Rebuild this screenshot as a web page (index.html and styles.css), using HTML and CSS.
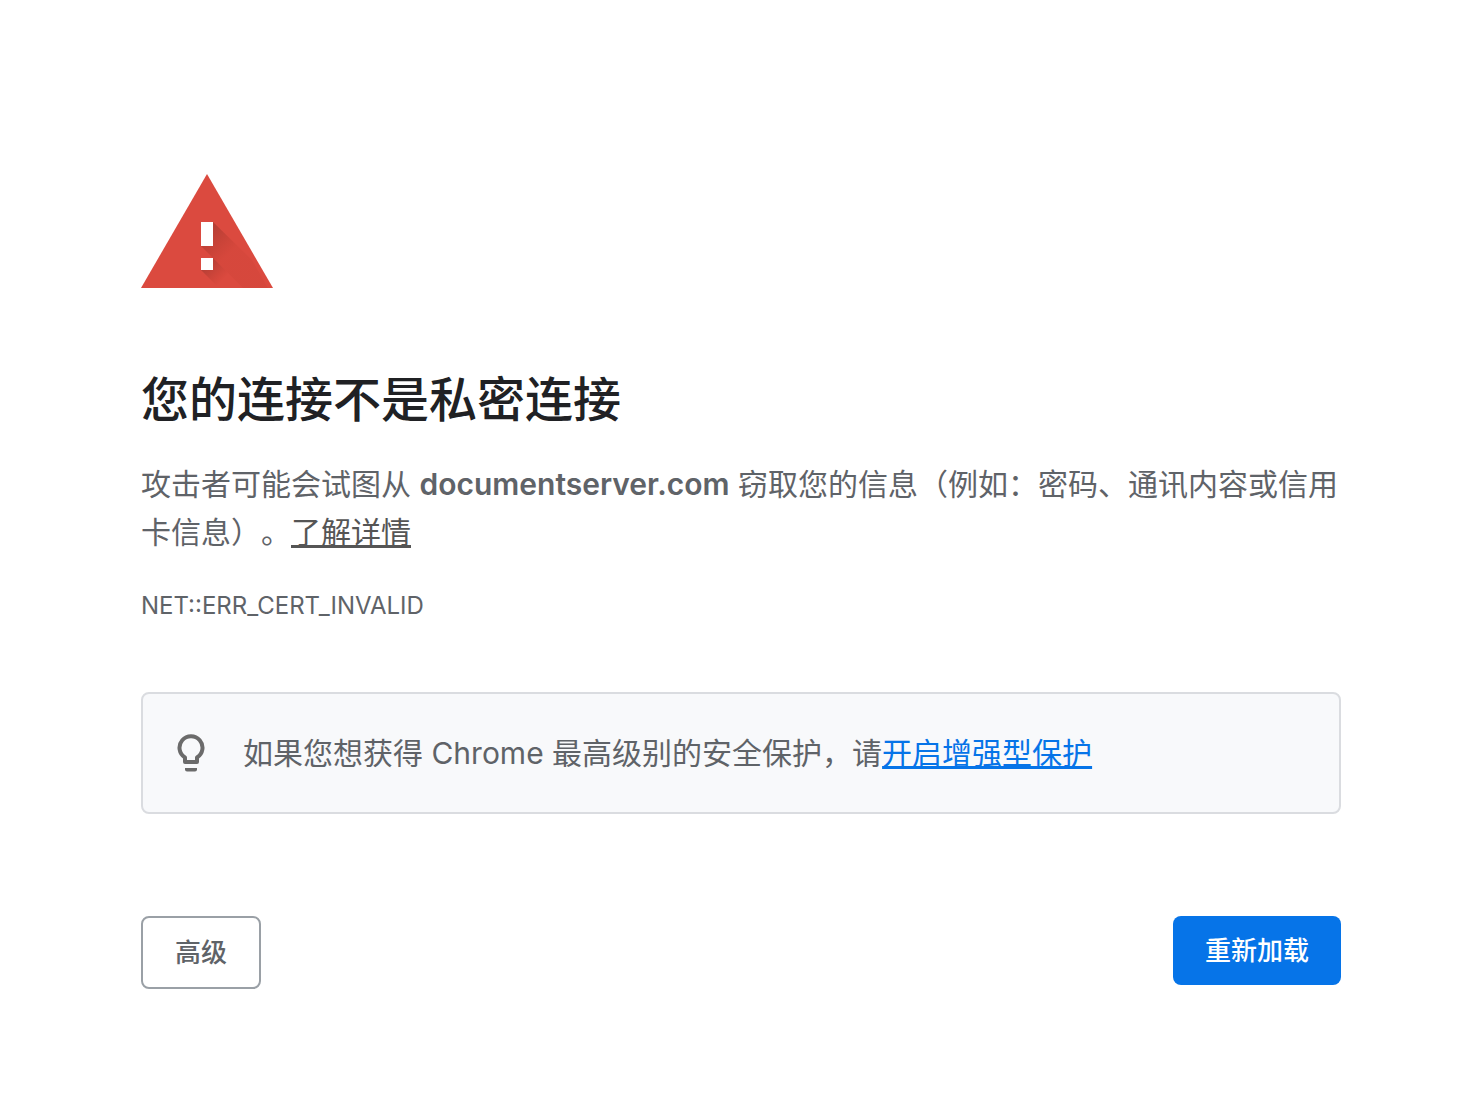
FILE: index.html
```html
<!DOCTYPE html>
<html lang="zh-CN">
<head>
  <meta charset="UTF-8" />
  <meta name="viewport" content="width=device-width, initial-scale=1.0"/>
  <title>隐私设置错误</title>
  <link rel="stylesheet" href="styles.css">
</head>
<body>
  <main class="container">
    <svg class="warning-icon" viewBox="0 0 132 114" aria-hidden="true">
      <defs>
        <linearGradient id="shade-top" gradientUnits="userSpaceOnUse" x1="66" y1="54" x2="90" y2="78">
          <stop offset="0" stop-color="#a33b32" stop-opacity=".75"/>
          <stop offset="1" stop-color="#b8382c" stop-opacity=".14"/>
        </linearGradient>
        <linearGradient id="shade-dot" gradientUnits="userSpaceOnUse" x1="66" y1="90" x2="82" y2="106">
          <stop offset="0" stop-color="#a33b32" stop-opacity=".7"/>
          <stop offset="1" stop-color="#b8382c" stop-opacity="0"/>
        </linearGradient>
      </defs>
      <path fill="#db4a3f" d="M66 0l66 114H0z"/>
      <path fill="url(#shade-top)" d="M72 48l39 38 16 28h-25L60 72z"/>
      <path fill="url(#shade-dot)" d="M72 84l30 30H78L60 96z"/>
      <path fill="#fff" d="M60 48h12v24H60zM60 84h12v12H60z"/>
    </svg>

    <h1>您的连接不是私密连接</h1>
    <p>攻击者可能会试图从 <strong>documentserver.com</strong> 窃取您的信息（例如：密码、通讯内容或信用卡信息）。<a href="#" class="learn-more">了解详情</a></p>
    <div class="error-code">NET::ERR_CERT_INVALID</div>

    <div class="promo">
      <svg class="bulb-icon" viewBox="0 0 28 38" aria-hidden="true">
        <path fill="none" stroke="#6b6b6b" stroke-width="4" stroke-linejoin="round" d="M8 28v-4.500A11.500 11.500 0 1 1 20 23.500V28z"/>
        <path fill="#6b6b6b" d="M8 34h12v1.500a2 2 0 0 1-2 2h-8a2 2 0 0 1-2-2z"/>
      </svg>
      <div>如果您想获得 Chrome 最高级别的安全保护，请<a href="#">开启增强型保护</a></div>
    </div>

    <div class="buttons">
      <button type="button" class="secondary">高级</button>
      <button type="button" class="primary">重新加载</button>
    </div>
  </main>
</body>
</html>
```

FILE: styles.css
```css
* { box-sizing: border-box; }

body {
  margin: 0;
  padding: 174px 39px 40px 41px;
  background: #fff;
  color: #5f6368;
  font-family: Inter, "Noto Sans CJK SC", sans-serif;
  font-size: 30px;
  line-height: 48px;
  text-spacing-trim: space-all;
}

.container {
  max-width: 1200px;
  margin: 0 auto;
}

.warning-icon {
  display: block;
  width: 132px;
  height: 114px;
  margin-bottom: 82px;
}

h1 {
  margin: 0 0 30px;
  color: #202124;
  font-size: 48px;
  font-weight: 500;
  line-height: 60px;
}

p {
  margin: 0 0 32px;
}

strong {
  font-weight: 600;
}

a {
  color: #0674e8;
  text-decoration-thickness: 3px;
  text-underline-offset: 2px;
  text-decoration-skip-ink: none;
}

.learn-more {
  color: #555;
}

.error-code {
  font-size: 24px;
  line-height: 36px;
}

.promo {
  display: flex;
  align-items: center;
  gap: 38px;
  margin-top: 68px;
  padding: 35px 34px;
  background: #f8f9fb;
  border: 2px solid #dadce0;
  border-radius: 8px;
}

.bulb-icon {
  flex: none;
  width: 28px;
  height: 38px;
}

.buttons {
  display: flex;
  justify-content: space-between;
  align-items: flex-start;
  margin-top: 102px;
}

button {
  padding: 16px 32px;
  border: none;
  border-radius: 8px;
  font-family: inherit;
  font-size: 26px;
  font-weight: 500;
  line-height: 37px;
  cursor: pointer;
}

.primary {
  background: #0674e8;
  color: #fff;
}

.secondary {
  background: #fff;
  border: 2px solid #9aa0a6;
  color: #5f6368;
}
```
